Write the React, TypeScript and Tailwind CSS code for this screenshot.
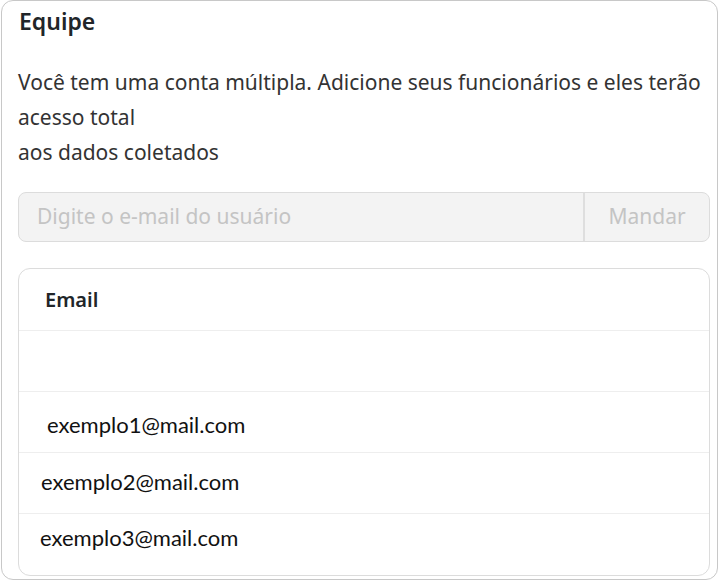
import { useState } from 'react';

const EMAILS = [
  { email: 'exemplo1@mail.com', pad: 'pl-[28px]', pos: 'pt-[20px]' },
  { email: 'exemplo2@mail.com', pad: 'pl-[22px]', pos: 'pt-[16px]' },
  { email: 'exemplo3@mail.com', pad: 'pl-[21px]', pos: 'pt-[11px]' },
];

export default function App() {
  const [email, setEmail] = useState('');

  return (
    <div className="w-[720px] h-[584px] bg-white font-['Noto_Sans',sans-serif]">
      <div className="ml-px w-[717px] h-[580px] border border-[#c8c8c8] rounded-[12px] px-[16px] pt-[4px] flex flex-col">
        {/* Header */}
        <h2 className="text-[23px] font-semibold text-[#212529] leading-[32px] pl-px">Equipe</h2>
        <p className="mt-[28px] text-[21px] leading-[35px] text-[#333] whitespace-nowrap">
          Você tem uma conta múltipla. Adicione seus funcionários e eles terão
          <br />
          acesso total
          <br />
          aos dados coletados
        </p>

        {/* Invite input */}
        <div className="mt-[22px] flex h-[50px] w-[692px] border border-[#dcdcdc] rounded-[8px] bg-[#f3f3f3] overflow-hidden">
          <input
            value={email}
            onChange={(e) => setEmail(e.target.value)}
            placeholder="Digite o e-mail do usuário"
            disabled
            className="flex-1 bg-transparent px-[18px] text-[21px] text-[#333] placeholder:text-[#c4c4c4] outline-none"
          />
          <button disabled className="w-[126px] border-l-2 border-[#dedede] text-[21px] text-[#c4c4c4]">Mandar</button>
        </div>

        {/* Members table */}
        <div className="mt-[26px] w-[692px] flex-1 mb-[3px] border border-[#dcdcdc] rounded-[12px] overflow-hidden flex flex-col">
          <div className="h-[62px] flex items-center pl-[26px] border-b border-[#eeeeee] text-[20px] font-semibold text-[#212529]">
            Email
          </div>
          <div className="h-[61px] border-b border-[#eeeeee]" />
          {EMAILS.map((row, i) => (
            <div
              key={row.email}
              className={`h-[61px] ${row.pos} ${row.pad} text-[22px] leading-[26px] text-[#111] font-['Lato',sans-serif] ${i < 2 ? 'border-b border-[#eeeeee]' : ''}`}
            >
              {row.email}
            </div>
          ))}
        </div>
      </div>
    </div>
  );
}
